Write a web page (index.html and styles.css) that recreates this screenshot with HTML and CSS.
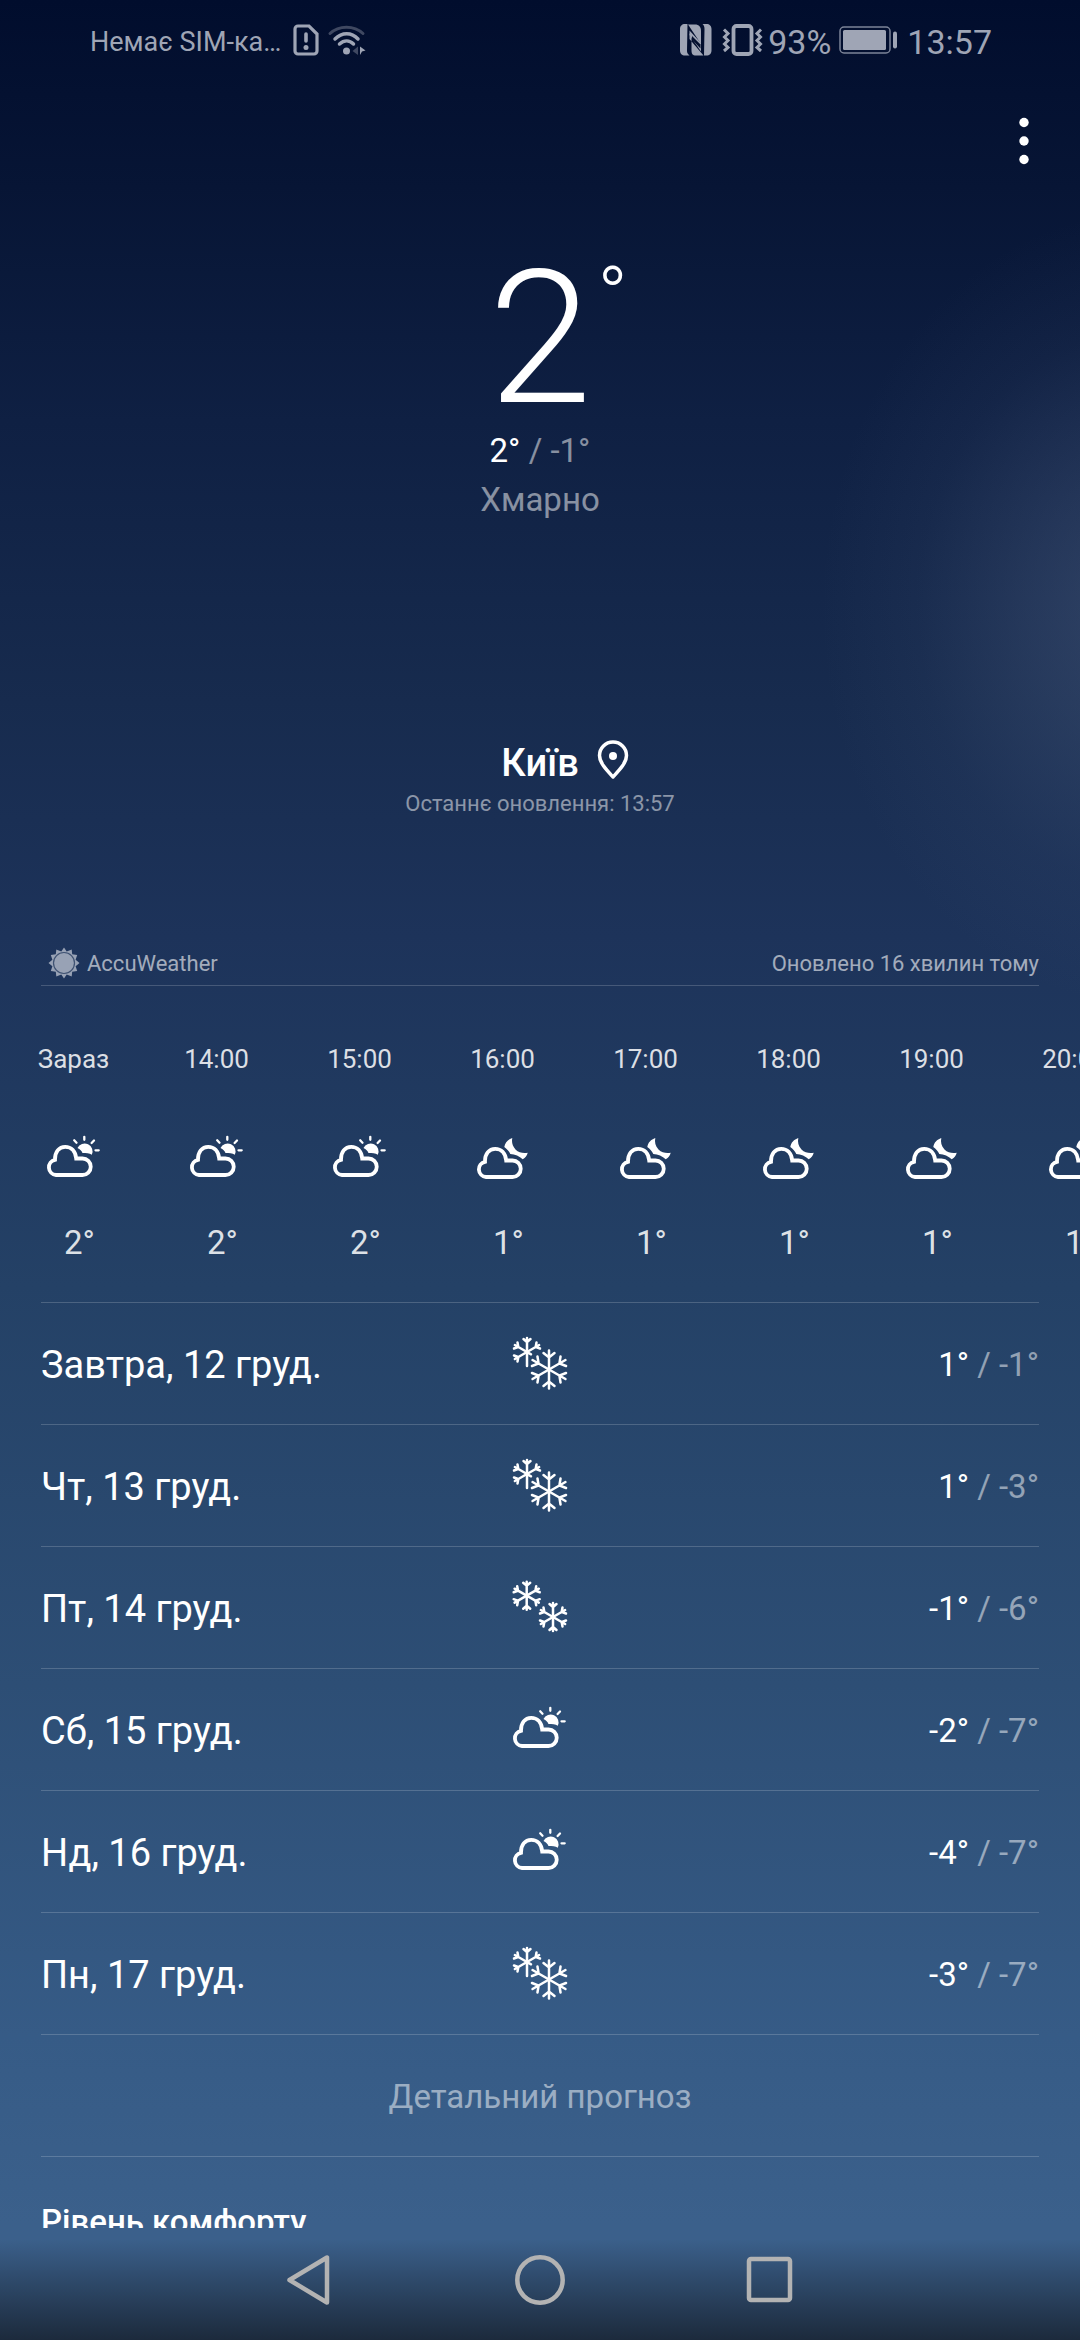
FILE: index.html
```html
<!DOCTYPE html>
<html lang="uk">

<head>
    <meta charset="UTF-8">
    <meta name="viewport" content="width=device-width, initial-scale=1.0">
    <title>Погода</title>
    <link rel="stylesheet" href="styles.css">
</head>

<body>
    <!-- Shared weather icons -->
    <svg class="sprite" aria-hidden="true">
        <symbol id="cloud" viewBox="0 0 72 72">
            <path d="M18 53a7.700 7.700 0 0 1-1-15.200C16.700 30 21 24.800 27.200 24.800c6 0 10.300 4.200 11 11.700H44.500a8.250 8.250 0 0 1 0 16.500Z" fill="none" stroke="#fff" stroke-width="3.800" />
        </symbol>
        <symbol id="cloud-sun" viewBox="0 0 72 72">
            <use href="#cloud" width="72" height="72" />
            <path d="M39.500 26A7.700 7.700 0 1 1 53.800 32.800C51.500 31.200 48 31 44.500 31 43.800 29 42 27 39.500 26Z" fill="#fff" />
            <path d="M46.300 14.800v3M57.500 28.300h3.200M56 18.500l-2.400 2.500M36.200 18.300l2.300 2.400" stroke="#fff" stroke-width="2.300" stroke-linecap="round" />
        </symbol>
        <symbol id="cloud-moon" viewBox="0 0 72 72">
            <use href="#cloud" x="1" y="2" width="72" height="72" />
            <path d="M45.300 16C41 17.500 38 20.500 37.300 25 40 27 42 29 43.300 32 48 32.500 52.500 34 55.700 37.300 58.500 35.500 60 33.500 60.700 30.700 57 31.600 52 31 48.500 27.500 45.300 24 44.500 20 45.300 16Z" fill="#fff" />
        </symbol>
        <g id="arm-big">
            <path d="M0 0V-19M-5.500-16.500L0-12 5.500-16.500" fill="none" stroke="#fff" stroke-width="2.500" stroke-linecap="round" />
        </g>
        <g id="arm-small">
            <path d="M0 0V-14M-3.500-13L0-10 3.500-13" fill="none" stroke="#fff" stroke-width="2.500" stroke-linecap="round" />
        </g>
        <g id="flake-big">
            <use href="#arm-big" />
            <use href="#arm-big" transform="rotate(60)" />
            <use href="#arm-big" transform="rotate(120)" />
            <use href="#arm-big" transform="rotate(180)" />
            <use href="#arm-big" transform="rotate(240)" />
            <use href="#arm-big" transform="rotate(300)" />
        </g>
        <g id="flake-small">
            <use href="#arm-small" />
            <use href="#arm-small" transform="rotate(60)" />
            <use href="#arm-small" transform="rotate(120)" />
            <use href="#arm-small" transform="rotate(180)" />
            <use href="#arm-small" transform="rotate(240)" />
            <use href="#arm-small" transform="rotate(300)" />
        </g>
        <symbol id="snow" viewBox="0 0 72 72">
            <g transform="translate(23 25)">
                <use href="#arm-small" />
                <use href="#arm-small" transform="rotate(60)" />
                <use href="#arm-small" transform="rotate(240)" />
                <use href="#arm-small" transform="rotate(300)" />
                <path d="M0 0V14M0 0L4 2.300" stroke="#fff" stroke-width="2.500" stroke-linecap="round" />
            </g>
            <use href="#flake-big" transform="translate(45 42.500)" />
        </symbol>
        <symbol id="flurries" viewBox="0 0 72 72">
            <use href="#flake-small" transform="translate(22.700 24.700)" />
            <use href="#flake-small" transform="translate(49 46)" />
        </symbol>
    </svg>

    <div class="status-bar">
        <div class="status-group">
            <span class="carrier">Немає SIM-ка…</span>
            <svg class="sim-icon" width="26" height="34" viewBox="0 0 26 34">
                <path d="M5 3H16L24 11V28a3 3 0 0 1-3 3H5a3 3 0 0 1-3-3V6a3 3 0 0 1 3-3Z" fill="none" stroke="#9fa5b5" stroke-width="3.200" />
                <path d="M13 11v7" stroke="#9fa5b5" stroke-width="3.600" stroke-linecap="round" />
                <circle cx="13" cy="24.500" r="2.500" fill="#9fa5b5" />
            </svg>
            <svg class="wifi-icon" width="40" height="34" viewBox="0 0 40 34">
                <path d="M3 10.500C12 2 27 2 36 10.500" fill="none" stroke="#3f4861" stroke-width="3" stroke-linecap="round" />
                <path d="M8 16C15 9 24.500 9 31 16M12.500 21C17 17 22.500 17 26.500 21" fill="none" stroke="#9fa5b5" stroke-width="3.500" stroke-linecap="round" />
                <circle cx="19.500" cy="28" r="3.500" fill="#9fa5b5" />
                <path d="M31 23.500V32L25.500 28Z" fill="#3f4861" />
                <path d="M33 32V23.500L38.500 27.500 35 28.500Z" fill="#9fa5b5" />
            </svg>
        </div>
        <div class="status-group">
            <svg width="32" height="32" viewBox="0 0 32 32">
                <path d="M7.500 0H5C2 0 0 2 0 5V26.500C0 29.500 2 31.500 5 31.500H9.500C7.500 30 7 28.500 7 26.500Z" fill="#9fa5b5" />
                <path d="M8 0.500H15C19 0.500 21 3 21 7V20Z" fill="#9fa5b5" />
                <path d="M9.500 9V15L23.500 31.500H16C12.500 31.500 11.500 29.500 11.500 26.500V14L9.500 9Z" fill="#9fa5b5" />
                <path d="M9.500 6.500L21 19V27.500L9.500 11Z" fill="#9fa5b5" />
                <path d="M22.500 0H26.500C29.500 0 31.500 2 31.500 5V26.500C31.500 29.500 29.500 31.500 26.500 31.500H24L24.500 5C24.500 3 24 1 22.500 0Z" fill="#9fa5b5" />
                <path d="M12 15.500V12L20.500 20.500V24.500Z" fill="#04102f" />
            </svg>
            <svg class="vibrate-icon" width="42" height="32" viewBox="0 0 42 32">
                <rect x="11.500" y="2" width="18" height="28" rx="3" fill="none" stroke="#9fa5b5" stroke-width="3.800" />
                <path d="M2 5.500L6 9.500 2.500 13 6 16.500 2.500 20 6 23.500 2 27M39 5.500L35 9.500 38.500 13 35 16.500 38.500 20 35 23.500 39 27" fill="none" stroke="#9fa5b5" stroke-width="3" />
            </svg>
            <span class="status-text">93%</span>
            <svg class="battery-icon" width="60" height="28" viewBox="0 0 60 28">
                <rect x="1" y="1" width="50" height="26" rx="4" fill="none" stroke="#7c8498" stroke-width="1.500" />
                <rect x="4" y="4" width="43" height="20" rx="1.500" fill="#9fa5b5" />
                <rect x="54" y="5.500" width="4" height="17" rx="2" fill="#9fa5b5" />
            </svg>
            <span class="status-text">13:57</span>
        </div>
    </div>

    <main class="screen">
        <div class="toolbar">
            <button class="menu-btn" aria-label="Меню">
                <svg width="10" height="48" viewBox="0 0 10 48">
                    <circle cx="5" cy="5.500" r="4.700" fill="#fff" />
                    <circle cx="5" cy="24" r="4.700" fill="#fff" />
                    <circle cx="5" cy="42.500" r="4.700" fill="#fff" />
                </svg>
            </button>
        </div>

        <section class="current">
            <div class="centered">
                <span class="big-temp">2</span>
                <span class="big-degree">°</span>
            </div>
            <div class="range">2° <span class="low">/ -1°</span></div>
            <div class="condition">Хмарно</div>
        </section>

        <section class="place">
            <div class="centered">
                <h1 class="city">Київ</h1>
                <svg class="pin" width="32" height="40" viewBox="0 0 32 40">
                    <path d="M16 37C10 30.500 2.500 23 2.500 15.500a13.500 13.500 0 0 1 27 0C29.500 23 22 30.500 16 37Z" fill="none" stroke="#fff" stroke-width="3.500" stroke-linejoin="round" />
                    <circle cx="16" cy="16" r="4" fill="#fff" />
                </svg>
            </div>
            <div class="refreshed">Останнє оновлення: 13:57</div>
        </section>

        <div class="source">
            <a class="provider" href="#">
                <svg width="32" height="32" viewBox="0 0 32 32">
                    <path d="M16 0.500L18.700 4.500 23.700 2.500 24.200 7.300 29.200 8 27.600 12.700 31.500 16 27.600 19.300 29.200 24 24.200 24.700 23.700 29.500 18.700 27.500 16 31.500 13.300 27.500 8.300 29.500 7.800 24.700 2.800 24 4.400 19.300 0.500 16 4.400 12.700 2.800 8 7.800 7.300 8.300 2.500 13.300 4.500Z" fill="#98a2b5" />
                    <circle cx="16" cy="16" r="10.500" fill="none" stroke="#3f5272" stroke-width="1.200" />
                </svg>
                <span>AccuWeather</span>
            </a>
            <span>Оновлено 16 хвилин тому</span>
        </div>

        <ul class="hourly">
            <li class="hour">
                <span class="hour-time">Зараз</span>
                <svg class="weather-icon"><use href="#cloud-sun" /></svg>
                <span class="hour-temp">2°</span>
            </li>
            <li class="hour">
                <span class="hour-time">14:00</span>
                <svg class="weather-icon"><use href="#cloud-sun" /></svg>
                <span class="hour-temp">2°</span>
            </li>
            <li class="hour">
                <span class="hour-time">15:00</span>
                <svg class="weather-icon"><use href="#cloud-sun" /></svg>
                <span class="hour-temp">2°</span>
            </li>
            <li class="hour">
                <span class="hour-time">16:00</span>
                <svg class="weather-icon"><use href="#cloud-moon" /></svg>
                <span class="hour-temp">1°</span>
            </li>
            <li class="hour">
                <span class="hour-time">17:00</span>
                <svg class="weather-icon"><use href="#cloud-moon" /></svg>
                <span class="hour-temp">1°</span>
            </li>
            <li class="hour">
                <span class="hour-time">18:00</span>
                <svg class="weather-icon"><use href="#cloud-moon" /></svg>
                <span class="hour-temp">1°</span>
            </li>
            <li class="hour">
                <span class="hour-time">19:00</span>
                <svg class="weather-icon"><use href="#cloud-moon" /></svg>
                <span class="hour-temp">1°</span>
            </li>
            <li class="hour">
                <span class="hour-time">20:00</span>
                <svg class="weather-icon"><use href="#cloud-moon" /></svg>
                <span class="hour-temp">1°</span>
            </li>
        </ul>

        <ul class="daily">
            <li class="day">
                <span class="day-name">Завтра, 12 груд.</span>
                <svg class="weather-icon"><use href="#snow" /></svg>
                <span class="day-temp">1° <span class="low">/ -1°</span></span>
            </li>
            <li class="day">
                <span class="day-name">Чт, 13 груд.</span>
                <svg class="weather-icon"><use href="#snow" /></svg>
                <span class="day-temp">1° <span class="low">/ -3°</span></span>
            </li>
            <li class="day">
                <span class="day-name">Пт, 14 груд.</span>
                <svg class="weather-icon"><use href="#flurries" /></svg>
                <span class="day-temp">-1° <span class="low">/ -6°</span></span>
            </li>
            <li class="day">
                <span class="day-name">Сб, 15 груд.</span>
                <svg class="weather-icon"><use href="#cloud-sun" /></svg>
                <span class="day-temp">-2° <span class="low">/ -7°</span></span>
            </li>
            <li class="day">
                <span class="day-name">Нд, 16 груд.</span>
                <svg class="weather-icon"><use href="#cloud-sun" /></svg>
                <span class="day-temp">-4° <span class="low">/ -7°</span></span>
            </li>
            <li class="day">
                <span class="day-name">Пн, 17 груд.</span>
                <svg class="weather-icon"><use href="#snow" /></svg>
                <span class="day-temp">-3° <span class="low">/ -7°</span></span>
            </li>
        </ul>

        <a class="details" href="#">Детальний прогноз</a>
        <h2 class="comfort">Рівень комфорту</h2>
    </main>

    <nav class="nav-bar">
        <button class="nav-btn" aria-label="Назад">
            <svg width="52" height="52" viewBox="0 0 52 52">
                <path d="M43 3.500V48.500L5.500 26Z" fill="none" stroke="#b3b3b3" stroke-width="4.500" stroke-linejoin="round" />
            </svg>
        </button>
        <button class="nav-btn" aria-label="Головний екран">
            <svg width="52" height="52" viewBox="0 0 52 52">
                <circle cx="26" cy="26" r="22.700" fill="none" stroke="#b3b3b3" stroke-width="4.500" />
            </svg>
        </button>
        <button class="nav-btn" aria-label="Останні програми">
            <svg width="52" height="52" viewBox="0 0 52 52">
                <rect x="5" y="5" width="41" height="41" rx="2" fill="none" stroke="#b3b3b3" stroke-width="4.500" />
            </svg>
        </button>
    </nav>
</body>

</html>
```
FILE: styles.css
```css
* {
    box-sizing: border-box;
}

body {
    margin: 0;
    height: 100vh;
    display: flex;
    flex-direction: column;
    overflow: hidden;
    color: white;
    font-family: Roboto, "Noto Sans", sans-serif;
    font-size: 33px;
    line-height: 40px;
    background:
        radial-gradient(ellipse 30% 17% at 106% 26%, rgba(88, 106, 140, 0.42), rgba(88, 106, 140, 0.26) 35%, rgba(88, 106, 140, 0.08) 70%, rgba(88, 106, 140, 0)),
        linear-gradient(#010d2d 0%, #071535 8%, #0f2043 18%, #172b4e 30%, #1d335a 40%, #244166 55%, #2d4e75 72%, #365b86 87%, #3b608b 95%);
}

a {
    color: inherit;
    text-decoration: none;
}

button {
    display: flex;
    align-items: center;
    justify-content: center;
    padding: 0;
    background: none;
    border: none;
    cursor: pointer;
}

ul {
    list-style: none;
    margin: 0;
    padding: 0;
}

svg {
    display: block;
    flex-shrink: 0;
}

.sprite {
    position: absolute;
    width: 0;
    height: 0;
}

.status-bar {
    height: 80px;
    padding: 0 88px 0 90px;
    display: flex;
    justify-content: space-between;
    align-items: center;
    color: #9fa5b5;
}

.status-group {
    display: flex;
    align-items: center;
}

.carrier {
    font-size: 27px;
    padding-top: 3px;
}

.sim-icon {
    margin-left: 12px;
}

.wifi-icon {
    margin-left: 8px;
}

.vibrate-icon {
    margin: 0 4px 0 10px;
}

.battery-icon {
    margin: 0 8px;
}

.status-text {
    font-size: 34px;
    padding-top: 3px;
}

.screen {
    flex: 1;
    min-height: 0;
    overflow: hidden;
}

.toolbar {
    display: flex;
    justify-content: flex-end;
    padding: 25px 20px;
}

.menu-btn {
    width: 72px;
    height: 72px;
}

.current {
    margin-top: 48px;
    text-align: center;
}

/* middle column stays centred, the extra mark hangs on its right */
.centered {
    display: grid;
    grid-template-columns: 1fr auto 1fr;
}

.centered > :first-child {
    grid-column: 2;
}

.big-temp {
    font-size: 186px;
    font-weight: 300;
    line-height: 176px;
}

.big-degree {
    font-size: 80px;
    font-weight: 300;
    line-height: 92px;
    text-align: left;
    padding-left: 6px;
}

.range,
.condition {
    line-height: 49px;
}

.condition,
.low {
    color: rgba(255, 255, 255, 0.5);
}

.place {
    margin-top: 213px;
    text-align: center;
}

.city {
    margin: 0;
    font-size: 38px;
    font-weight: 500;
    line-height: 52px;
}

.pin {
    margin: 3px 0 0 18px;
}

.refreshed {
    font-size: 22px;
    line-height: 30px;
    color: rgba(255, 255, 255, 0.5);
}

.source {
    margin: 128px 41px 0;
    padding-bottom: 6px;
    display: flex;
    justify-content: space-between;
    align-items: center;
    border-bottom: 1px solid rgba(255, 255, 255, 0.18);
    font-size: 22px;
    line-height: 28px;
    color: rgba(255, 255, 255, 0.6);
}

.source span {
    padding-top: 2px;
}

.provider {
    display: flex;
    align-items: center;
    gap: 7px;
    padding-left: 7px;
}

.hourly {
    display: flex;
    overflow: hidden;
    padding: 57px 0 39px 2px;
}

.hour {
    flex: 0 0 143px;
    display: flex;
    flex-direction: column;
    align-items: center;
    color: rgba(255, 255, 255, 0.85);
}

.hour-time {
    font-size: 26px;
    line-height: 32px;
    margin-bottom: 47px;
}

.hour-temp {
    margin-top: 29px;
    padding-left: 12px;
}

.weather-icon {
    width: 72px;
    height: 72px;
}

.daily {
    margin: 0 41px;
}

.day {
    display: grid;
    grid-template-columns: 1fr auto 1fr;
    align-items: center;
    padding: 24px 0 25px;
    border-top: 1px solid rgba(255, 255, 255, 0.18);
}

.day-name,
.day-temp {
    padding-top: 3px;
}

.day-name {
    font-size: 38px;
}

.day-temp {
    text-align: right;
}

.details {
    display: block;
    margin: 0 41px;
    padding: 42px 0 39px;
    border-top: 1px solid rgba(255, 255, 255, 0.18);
    text-align: center;
    color: rgba(255, 255, 255, 0.5);
}

.comfort {
    margin: 0 41px;
    padding-top: 45px;
    border-top: 1px solid rgba(255, 255, 255, 0.18);
    font-size: 33px;
    font-weight: 500;
}

.nav-bar {
    height: 112px;
    padding-bottom: 8px;
    display: flex;
    justify-content: center;
    align-items: center;
    gap: 130px;
    background: linear-gradient(rgba(28, 42, 60, 0) 10%, rgba(28, 42, 60, 0.45) 50%, #1c2a3c);
}

.nav-btn {
    width: 100px;
    height: 100px;
}
```
